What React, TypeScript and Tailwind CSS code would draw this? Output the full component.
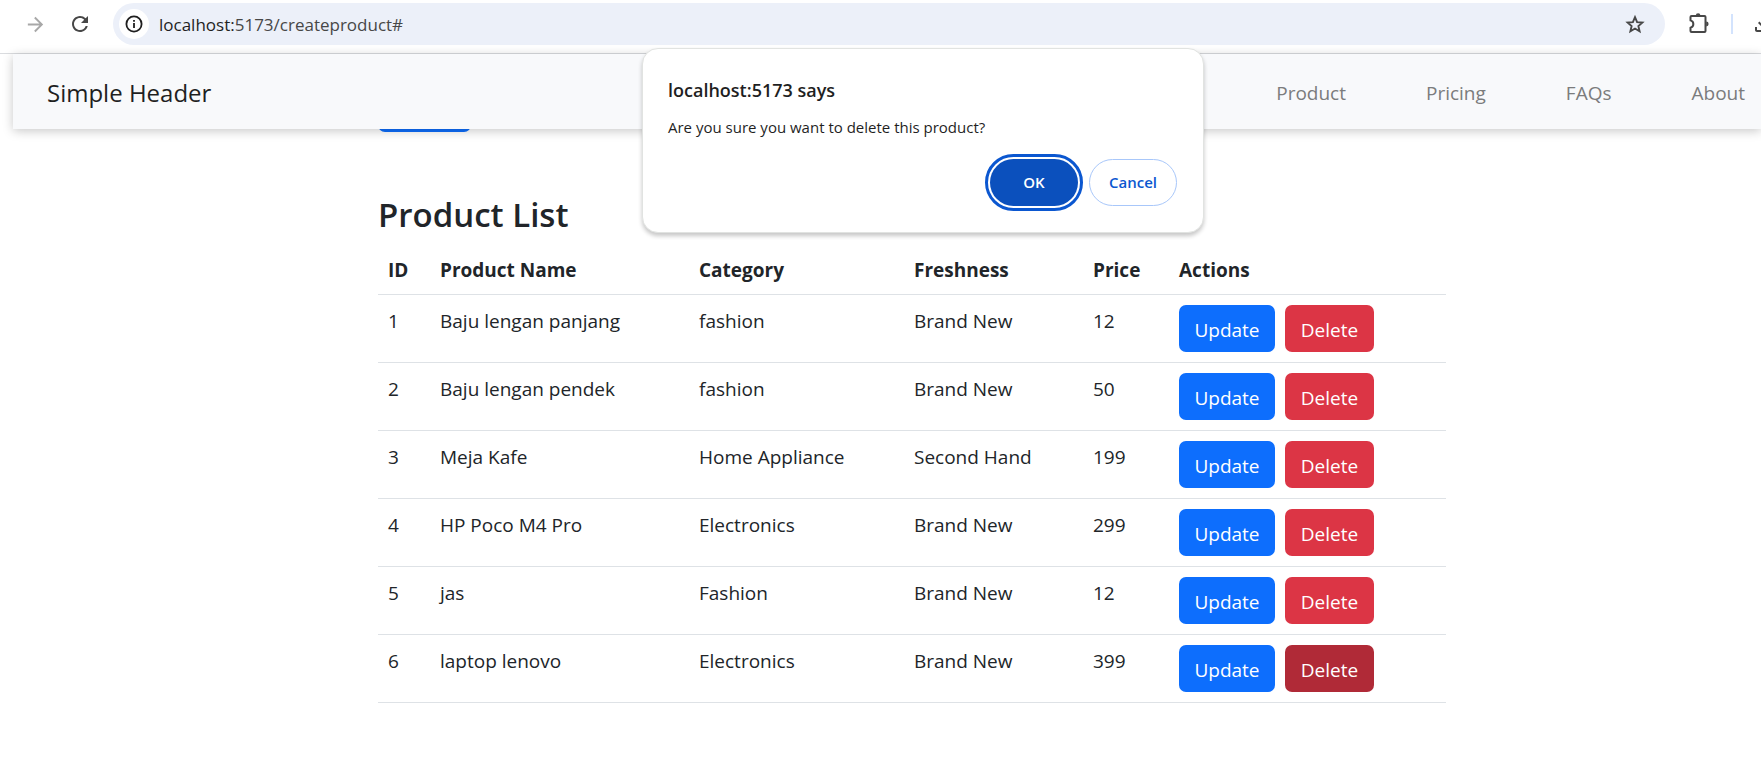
import { MdArrowForward, MdOutlineFileDownload, MdRefresh } from "react-icons/md";

type Product = {
  id: number;
  name: string;
  category: string;
  freshness: string;
  price: number;
  active?: boolean;
};

const products: Product[] = [
  { id: 1, name: "Baju lengan panjang", category: "fashion", freshness: "Brand New", price: 12 },
  { id: 2, name: "Baju lengan pendek", category: "fashion", freshness: "Brand New", price: 50 },
  { id: 3, name: "Meja Kafe", category: "Home Appliance", freshness: "Second Hand", price: 199 },
  { id: 4, name: "HP Poco M4 Pro", category: "Electronics", freshness: "Brand New", price: 299 },
  { id: 5, name: "jas", category: "Fashion", freshness: "Brand New", price: 12 },
  { id: 6, name: "laptop lenovo", category: "Electronics", freshness: "Brand New", price: 399, active: true },
];

const navLinks = ["Product", "Pricing", "FAQs", "About"];

function InfoIcon() {
  return (
    <svg width="20" height="20" viewBox="0 0 20 20" fill="none" aria-hidden="true">
      <circle cx="10" cy="10" r="7.6" stroke="currentColor" strokeWidth="1.8" />
      <path d="M9.1 9h1.8v5H9.1zM9.1 6h1.8v1.8H9.1z" fill="currentColor" />
    </svg>
  );
}

function StarIcon() {
  return (
    <svg width="24" height="24" viewBox="0 0 24 24" fill="none" aria-hidden="true">
      <path
        d="M12 5.2l2.1 4.9 5.3.5-4 3.5 1.2 5.2L12 16.5l-4.6 2.8 1.2-5.2-4-3.5 5.3-.5z"
        stroke="currentColor"
        strokeWidth="1.9"
        strokeLinejoin="miter"
      />
    </svg>
  );
}

function PuzzleIcon() {
  return (
    <svg width="24" height="24" viewBox="0 0 24 24" fill="none" aria-hidden="true">
      <path
        d="M3.5 4H16.5a1 1 0 0 1 1 1V19a1 1 0 0 1-1 1H3.5a1 1 0 0 1-1-1V15.6c3.8-1 3.8-6.2 0-7.2V5a1 1 0 0 1 1-1z"
        stroke="currentColor"
        strokeWidth="2"
        strokeLinejoin="round"
      />
      <path d="M7.8 3.6a2.3 2.3 0 0 1 4.6 0z" fill="currentColor" />
      <path d="M18.2 9.6a2.4 2.4 0 0 1 0 4.8z" fill="currentColor" />
    </svg>
  );
}

function BrowserBar() {
  return (
    <div className="flex h-[54px] items-start border-b border-[#dadcdf] bg-white pt-[3px] pl-6 text-[#474747]">
      <div className="flex h-[42px] items-center gap-[21px]">
        <button type="button" aria-label="Forward" className="text-[#a8a8a8]">
          <MdArrowForward size={23} />
        </button>
        <button type="button" aria-label="Reload">
          <MdRefresh size={24} />
        </button>
      </div>
      <div className="ml-[21px] flex h-[42px] min-w-0 flex-1 items-center rounded-full bg-[#ecf0f9] pr-[18px] pl-[6px]">
        <button
          type="button"
          aria-label="Site information"
          className="flex size-[30px] shrink-0 items-center justify-center rounded-full bg-white text-[#1f1f1f]"
        >
          <InfoIcon />
        </button>
        <div className="ml-[10px] flex-1 pt-[2px] text-[17px] leading-6">
          <span className="text-[#1f1f1f]">localhost:</span>5173/createproduct#
        </div>
        <button type="button" aria-label="Bookmark">
          <StarIcon />
        </button>
      </div>
      <div className="flex h-[42px] w-24 shrink-0 items-center overflow-hidden pl-[23px]">
        <button type="button" aria-label="Extensions" className="shrink-0">
          <PuzzleIcon />
        </button>
        <div className="ml-[19px] h-5 w-[2px] shrink-0 bg-[#d3e3fd]" />
        <button type="button" aria-label="Downloads" className="ml-[18px] shrink-0">
          <MdOutlineFileDownload size={24} />
        </button>
      </div>
    </div>
  );
}

function SiteHeader() {
  return (
    <header className="relative z-10 ml-[13px] flex h-[75px] items-center justify-between bg-[#f8f9fb] pt-[2px] pr-4 pl-[34px] shadow-[0_2px_10px_rgba(0,0,0,0.22)]">
      <a href="#home" className="text-[24px] leading-[38px] text-[#1f1f1f]">
        Simple Header
      </a>
      <nav className="flex gap-20 text-[19px] leading-[30px] text-[#7b7c7d]">
        {navLinks.map((label) => (
          <a key={label} href="#nav">
            {label}
          </a>
        ))}
      </nav>
    </header>
  );
}

function ProductTable() {
  return (
    <table className="w-full table-fixed border-collapse text-left text-[19px] leading-[30px]">
      <colgroup>
        <col className="w-[52px]" />
        <col className="w-[259px]" />
        <col className="w-[215px]" />
        <col className="w-[179px]" />
        <col className="w-[86px]" />
        <col />
      </colgroup>
      <thead>
        <tr className="border-b border-[#dee2e6]">
          {["ID", "Product Name", "Category", "Freshness", "Price", "Actions"].map((title) => (
            <th key={title} className="px-[10px] pt-[11px] pb-[9px] font-bold">
              {title}
            </th>
          ))}
        </tr>
      </thead>
      <tbody>
        {products.map((product) => (
          <tr key={product.id} className="border-b border-[#dee2e6] align-top">
            <td className="px-[10px] pt-[11px]">{product.id}</td>
            <td className="px-[10px] pt-[11px]">{product.name}</td>
            <td className="px-[10px] pt-[11px]">{product.category}</td>
            <td className="px-[10px] pt-[11px]">{product.freshness}</td>
            <td className="px-[10px] pt-[11px]">{product.price}</td>
            <td className="p-[10px]">
              <div className="flex gap-[10px] text-white">
                <button type="button" className="h-[47px] w-24 rounded-[7px] bg-[#0d6efd] pt-[2px]">
                  Update
                </button>
                <button
                  type="button"
                  className={
                    product.active
                      ? "h-[47px] w-[89px] rounded-[7px] bg-[#b02a37] pt-[2px]"
                      : "h-[47px] w-[89px] rounded-[7px] bg-[#dc3545] pt-[2px]"
                  }
                >
                  Delete
                </button>
              </div>
            </td>
          </tr>
        ))}
      </tbody>
    </table>
  );
}

function ConfirmDialog() {
  return (
    <div
      role="alertdialog"
      aria-labelledby="confirm-title"
      aria-describedby="confirm-message"
      className="absolute top-12 left-[642px] z-20 w-[562px] rounded-[16px] border border-[#e1e3e1] bg-white pt-[26px] pr-[26px] pb-[26px] pl-[25px] text-[#1f1f1f] shadow-[0_3px_4px_rgba(0,0,0,0.22)]"
    >
      <h2 id="confirm-title" className="text-[18px] leading-[30px] font-semibold">
        localhost:5173 says
      </h2>
      <p id="confirm-message" className="mt-[10px] text-[15px] leading-6">
        Are you sure you want to delete this product?
      </p>
      <div className="mt-5 flex justify-end gap-[11px] text-[15px] font-semibold">
        <button
          type="button"
          className="h-[47px] w-[88px] rounded-full bg-[#0b50bd] text-white outline-3 outline-offset-2 outline-[#0b57d0]"
        >
          OK
        </button>
        <button type="button" className="h-[47px] w-[88px] rounded-full border border-[#a8c7fa] text-[#0b57d0]">
          Cancel
        </button>
      </div>
    </div>
  );
}

export default function App() {
  return (
    <div className="relative min-h-screen overflow-hidden bg-white font-['Open_Sans','Noto_Sans',sans-serif] text-[#212529]">
      <BrowserBar />
      <SiteHeader />
      <main className="mr-[315px] ml-[378px]">
        <div className="-mt-[44px] h-[47px] w-[93px] rounded-[7px] bg-[#0d6efd]" />
        <h1 className="mt-[62px] mb-2 text-[33px] leading-[42px] font-semibold">Product List</h1>
        <ProductTable />
      </main>
      <ConfirmDialog />
    </div>
  );
}
